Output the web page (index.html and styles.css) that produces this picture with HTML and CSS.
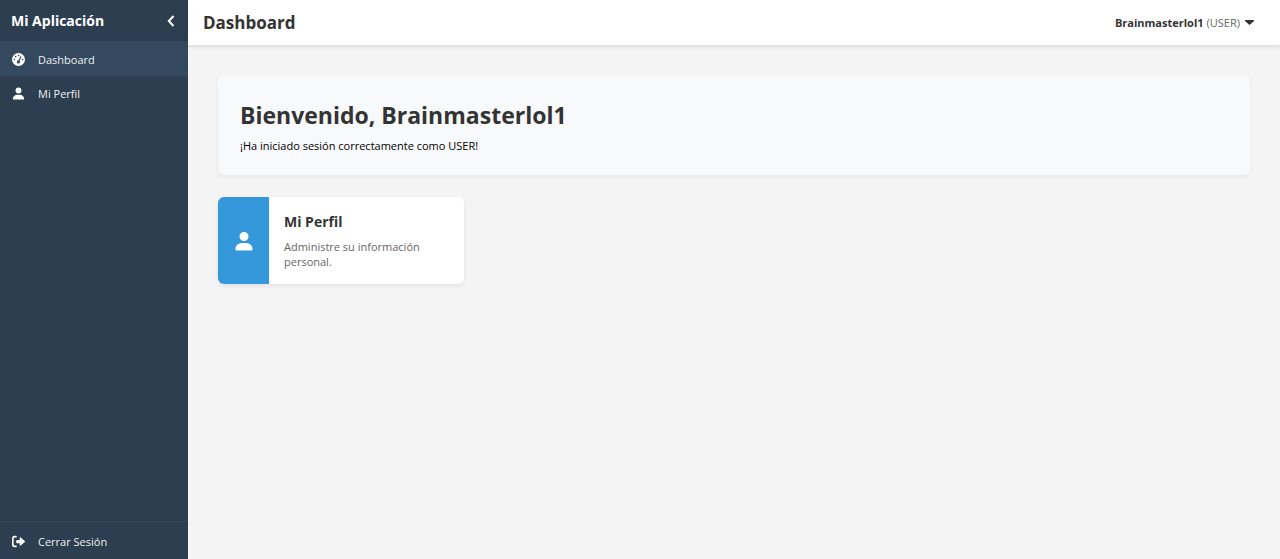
FILE: index.html
```html
<!DOCTYPE html>
<html lang="es">
<head>
<meta charset="utf-8">
<meta name="viewport" content="width=device-width, initial-scale=1">
<title>Dashboard - Mi Aplicación</title>
<link rel="stylesheet" href="styles.css">
</head>
<body>
<svg class="sprite" aria-hidden="true">
  <symbol id="icon-user" viewBox="0 0 448 512"><path d="M224 256a116 116 0 1 0 0-232 116 116 0 0 0 0 232zM178 304C80 304 0 375 0 470c0 14 12 26 26 26h396c14 0 26-12 26-26 0-95-80-166-178-166z"/></symbol>
</svg>
<div class="app">
  <aside class="sidebar">
    <div class="sidebar-header">
      <span class="brand">Mi Aplicación</span>
      <button class="collapse" type="button" aria-label="Contraer menú">
        <svg width="8" height="12" viewBox="0 0 8 12" aria-hidden="true"><path d="M6.5 1 1.8 6l4.7 5" fill="none" stroke="currentColor" stroke-width="2"/></svg>
      </button>
    </div>
    <nav class="menu">
      <a class="item active" href="#">
        <svg class="icon" viewBox="0 0 512 512" aria-hidden="true"><path fill-rule="evenodd" d="M0 256a256 256 0 1 1 512 0 256 256 0 1 1-512 0zm288-160a32 32 0 1 0-64 0 32 32 0 1 0 64 0zm-32 320a64 64 0 0 0 45-109l64-147a24 24 0 1 0-44-19l-64 147a64 64 0 0 0-1 128zm-80-272a32 32 0 1 0-64 0 32 32 0 1 0 64 0zM96 288a32 32 0 1 0 0-64 32 32 0 1 0 0 64zm352-32a32 32 0 1 0-64 0 32 32 0 1 0 64 0z"/></svg>
        Dashboard
      </a>
      <a class="item" href="#">
        <svg class="icon" viewBox="0 0 448 512" aria-hidden="true"><use href="#icon-user"/></svg>
        Mi Perfil
      </a>
    </nav>
    <div class="sidebar-footer">
      <a class="item" href="#">
        <svg class="icon" viewBox="0 0 512 512" aria-hidden="true"><path d="M502 273 342 417c-15 14-38 4-38-17v-80H192c-13 0-24-11-24-24v-80c0-13 11-24 24-24h112v-80c0-21 23-31 38-17l160 144c12 9 12 25 0 34zM160 32c18 0 32 14 32 32s-14 32-32 32H96c-18 0-32 14-32 32v256c0 18 14 32 32 32h64c18 0 32 14 32 32s-14 32-32 32H96c-53 0-96-43-96-96V128c0-53 43-96 96-96z"/></svg>
        Cerrar Sesión
      </a>
    </div>
  </aside>
  <div class="main">
    <header class="topbar">
      <h1 class="page-title">Dashboard</h1>
      <button class="user" type="button">
        <strong>Brainmasterlol1</strong>
        <span class="role">(USER)</span>
        <svg class="caret" width="9" height="5" viewBox="0 0 9 5" aria-hidden="true"><path d="M0 0h9v1L4.5 5 0 1z"/></svg>
      </button>
    </header>
    <main class="content">
      <section class="welcome">
        <h2>Bienvenido, Brainmasterlol1</h2>
        <p>¡Ha iniciado sesión correctamente como USER!</p>
      </section>
      <div class="cards">
        <a class="card" href="#">
          <span class="card-icon"><svg width="18" height="20" viewBox="0 0 448 512" aria-hidden="true"><use href="#icon-user"/></svg></span>
          <span class="card-body">
            <strong class="card-title">Mi Perfil</strong>
            <span class="card-text">Administre su información personal.</span>
          </span>
        </a>
      </div>
    </main>
  </div>
</div>
</body>
</html>
```

FILE: styles.css
```css
* { box-sizing: border-box; }

body {
  margin: 0;
  background: #f4f4f4;
  color: #000;
  font: 11px/15px "Segoe UI", "Open Sans", "Noto Sans", sans-serif;
}

h1, h2, p { margin: 0; }
a { color: inherit; text-decoration: none; }
svg { fill: currentColor; }
.sprite { display: none; }

button {
  border: 0;
  padding: 0;
  background: none;
  color: inherit;
  font: inherit;
  cursor: pointer;
}

.app { display: flex; min-height: 100vh; }

.sidebar {
  display: flex;
  flex-direction: column;
  flex: 0 0 188px;
  background: #2c3e50;
  color: #ecf0f1;
}

.sidebar-header {
  display: flex;
  align-items: center;
  justify-content: space-between;
  height: 42px;
  padding: 0 13px 0 11px;
  border-bottom: 1px solid #34495e;
  color: #fff;
}

.brand { font-size: 14px; font-weight: 700; }
.collapse { display: flex; }
.menu { flex: 1; }

.item {
  display: flex;
  align-items: center;
  gap: 13px;
  height: 34px;
  padding: 0 12px;
}

.item.active { background: #34495e; }
.icon { width: 13px; height: 13px; color: #fff; }

.sidebar-footer {
  padding: 2px 0 1px;
  border-top: 1px solid #34495e;
}

.main { flex: 1; min-width: 0; }

.topbar {
  display: flex;
  align-items: center;
  justify-content: space-between;
  height: 45px;
  padding: 0 26px 0 15px;
  background: #fff;
  box-shadow: 0 2px 4px rgba(0, 0, 0, 0.1);
  color: #333;
}

.page-title { font-size: 17px; line-height: 24px; }
.user { display: flex; align-items: center; gap: 3px; }
.role { color: #666; }
.caret { margin-left: 2px; }
.content { padding: 30px; }

.welcome {
  margin-bottom: 22px;
  padding: 24px 22px 22px;
  border-radius: 6px;
  background: #f8f9fb;
  box-shadow: 0 2px 4px rgba(0, 0, 0, 0.05);
}

.welcome h2 { margin-bottom: 7px; color: #333; font-size: 23px; line-height: 32px; }

.cards {
  display: grid;
  grid-template-columns: repeat(auto-fill, minmax(230px, 1fr));
  gap: 16px;
}

.card {
  display: flex;
  overflow: hidden;
  border-radius: 6px;
  background: #fff;
  box-shadow: 0 2px 4px rgba(0, 0, 0, 0.08);
}

.card-icon {
  display: flex;
  align-items: center;
  justify-content: center;
  flex: 0 0 51px;
  background: #3498db;
  color: #fff;
}

.card-body { padding: 15px; }
.card-title { display: block; margin-bottom: 7px; color: #333; font-size: 14px; line-height: 20px; }
.card-text { display: block; color: #666; }
```
